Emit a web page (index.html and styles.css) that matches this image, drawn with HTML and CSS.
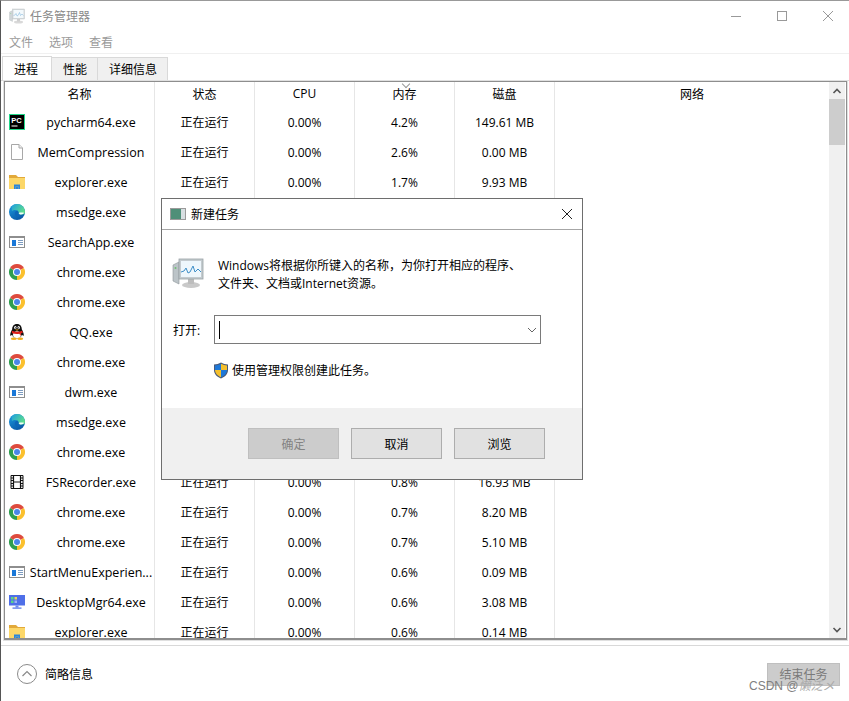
FILE: index.html
```html
<!DOCTYPE html>
<html lang="zh-CN">
<head>
    <meta charset="UTF-8">
    <title>任务管理器</title>
    <link rel="stylesheet" href="styles.css">
</head>
<body>
    <svg class="sprite" xmlns="http://www.w3.org/2000/svg">
        <defs>
            <linearGradient id="edgeBlue" x1="0" y1="0" x2="0.6" y2="1">
                <stop offset="0" stop-color="#1b9de2"/>
                <stop offset="1" stop-color="#0a5aa8"/>
            </linearGradient>
            <linearGradient id="edgeGreen" x1="0" y1="0" x2="1" y2="0.6">
                <stop offset="0" stop-color="#1e9ee0"/>
                <stop offset="1" stop-color="#5fe08a"/>
            </linearGradient>
        </defs>
        <symbol id="ic-pycharm" viewBox="0 0 16 16">
            <rect x="0.5" y="0.5" width="15" height="15" fill="#000" stroke="#21d789"/>
            <text x="2.2" y="8.6" class="pc-text">PC</text>
            <rect x="2.5" y="11.5" width="6" height="1" fill="#fff"/>
        </symbol>
        <symbol id="ic-doc" viewBox="0 0 16 16">
            <path d="M2.5 0.5H10L13.5 4V15.5H2.5Z" fill="#fff" stroke="#a8a8a8"/>
            <path d="M10 0.5V4H13.5" fill="#eee" stroke="#a8a8a8"/>
        </symbol>
        <symbol id="ic-folder" viewBox="0 0 16 16">
            <path d="M0 1H7L9 3H16V15H0Z" fill="#e2a93a"/>
            <rect x="0" y="4" width="16" height="11" fill="#fcd768"/>
            <path d="M5 15V10.5H11V15H9.5V12.5H6.5V15Z" fill="#2a86dc"/>
            <rect x="6.5" y="12.5" width="3" height="2.5" fill="#2a86dc"/>
        </symbol>
        <symbol id="ic-edge" viewBox="0 0 16 16">
            <circle cx="8" cy="8" r="8" fill="url(#edgeBlue)"/>
            <path d="M3 2C4.500 0.700 6.200 0 8 0C12.500 0 16 3.500 16 8.200C16 9.600 14.500 10.600 12 10.600C10 10.600 9 9.800 9.600 8.600C8.800 6.200 5.500 5.200 3 7C2.500 5.500 2.500 3.500 3 2Z" fill="url(#edgeGreen)"/>
            <path d="M9.600 8.600C8.800 9.800 9.600 11 11.500 11.400C10 13.200 7 13 6 10.800C5.400 9.200 6.400 7 8.200 6.600C9 7 9.600 7.800 9.600 8.600Z" fill="#0d66b8"/>
            <path d="M10 8.800C11 8.400 13 8.200 15 8.800C14.600 10 12.800 10.600 11.400 10.400C10.200 10.200 9.600 9.600 10 8.800Z" fill="#f2fbf8"/>
        </symbol>
        <symbol id="ic-app" viewBox="0 0 16 16">
            <rect x="0.5" y="2.5" width="15" height="11" fill="#fff" stroke="#8e8e8e"/>
            <rect x="0" y="2" width="16" height="2" fill="#8e8e8e"/>
            <rect x="3" y="6" width="4" height="6" fill="#1a78d8"/>
            <path d="M9 6.500H14M9 8.500H14M9 10.500H14" stroke="#7d9cc0"/>
        </symbol>
        <symbol id="ic-chrome" viewBox="0 0 16 16">
            <path d="M8 8L1.070 4A8 8 0 0 1 14.930 4Z" fill="#dd4b3e"/>
            <path d="M8 8L14.930 4A8 8 0 0 1 8 16Z" fill="#fbc02d"/>
            <path d="M8 8L8 16A8 8 0 0 1 1.070 4Z" fill="#2f9e4f"/>
            <circle cx="8" cy="8" r="4" fill="#fff"/>
            <circle cx="8" cy="8" r="3" fill="#4a86e8"/>
        </symbol>
        <symbol id="ic-qq" viewBox="0 0 16 16">
            <path d="M8 0C4.600 0 3.200 2.600 3.200 5.200C2 7.400 0.800 9.800 1.400 12L3.200 10.800C3.800 13.400 5.600 14.400 8 14.400C10.400 14.400 12.200 13.400 12.800 10.800L14.600 12C15.200 9.800 14 7.400 12.800 5.200C12.800 2.600 11.400 0 8 0Z" fill="#111"/>
            <ellipse cx="8" cy="10.800" rx="4" ry="3.600" fill="#fff"/>
            <ellipse cx="6.300" cy="3.600" rx="1.200" ry="1.500" fill="#fff"/>
            <ellipse cx="9.700" cy="3.600" rx="1.200" ry="1.500" fill="#fff"/>
            <circle cx="6.600" cy="3.800" r="0.600" fill="#111"/>
            <circle cx="9.400" cy="3.800" r="0.600" fill="#111"/>
            <path d="M6 5.400H10L8 6.800Z" fill="#f0b020"/>
            <path d="M2.800 6.800C6 8.200 10 8.200 13.200 6.800L13.800 8.800L11.800 9.400L12 12L10.200 9.800C8 10.200 5.600 10 3 9.200Z" fill="#e0201a"/>
            <ellipse cx="4.800" cy="14.800" rx="3" ry="1.200" fill="#f0b020"/>
            <ellipse cx="11.200" cy="14.800" rx="3" ry="1.200" fill="#f0b020"/>
        </symbol>
        <symbol id="ic-film" viewBox="0 0 16 16">
            <path d="M2 1.500H14V14.500H2Z" fill="#fff" stroke="#111" stroke-width="1"/>
            <path d="M4.500 1.500V14.500M11.500 1.500V14.500M4.500 8H11.500" stroke="#111" stroke-width="1.200"/>
            <path d="M2 4H4.500M2 6.500H4.500M2 9.500H4.500M2 12H4.500M11.500 4H14M11.500 6.500H14M11.500 9.500H14M11.500 12H14" stroke="#111"/>
        </symbol>
        <symbol id="ic-desktop" viewBox="0 0 16 16">
            <rect x="0" y="1" width="16" height="10.500" fill="#4f6fe8"/>
            <rect x="2" y="3" width="2.500" height="2.500" fill="#58d48a"/>
            <rect x="5.500" y="3" width="2.500" height="2.500" fill="#e6d85a"/>
            <rect x="2" y="6.500" width="2.500" height="2.500" fill="#58d48a"/>
            <rect x="5.500" y="6.500" width="2.500" height="2.500" fill="#9fb4f4"/>
            <rect x="6.500" y="11.500" width="3" height="2" fill="#6f8af0"/>
            <rect x="3.500" y="13.500" width="9" height="1.200" fill="#4f6fe8"/>
        </symbol>
        <symbol id="ic-monitor" viewBox="0 0 32 32">
            <ellipse cx="19" cy="28" rx="9" ry="3" fill="#c9c9c9"/>
            <rect x="16" y="22" width="6" height="5" fill="#bdbdbd"/>
            <path d="M1 8L7 5V27L1 24Z" fill="#bcc4c8" stroke="#8d9599" stroke-width="0.600"/>
            <circle cx="3.500" cy="11" r="1" fill="#6fbf73"/>
            <rect x="7" y="2" width="24" height="20" fill="#c4cbcf" stroke="#9aa2a6" stroke-width="0.800"/>
            <rect x="9" y="4" width="20" height="16" fill="#eef7fc"/>
            <path d="M9 15L12 14L14 11L16 16L18 15L21 9L23 15L26 12L29 15" fill="none" stroke="#3f8fc8" stroke-width="1"/>
        </symbol>
    </svg>

    <div class="window">
        <div class="titlebar">
            <svg class="title-icon"><use href="#ic-monitor"/></svg>
            <span class="title-text">任务管理器</span>
            <div class="win-controls">
                <span class="ctl"><svg width="12" height="12" viewBox="0 0 12 12"><path d="M1 6.500H11" stroke="#999"/></svg></span>
                <span class="ctl"><svg width="12" height="12" viewBox="0 0 12 12"><rect x="1.500" y="1.500" width="9" height="9" fill="none" stroke="#999"/></svg></span>
                <span class="ctl"><svg width="12" height="12" viewBox="0 0 12 12"><path d="M1 1L11 11M11 1L1 11" stroke="#999"/></svg></span>
            </div>
        </div>
        <div class="menubar">
            <span>文件</span>
            <span>选项</span>
            <span>查看</span>
        </div>
        <div class="tabs">
            <span class="tab active">进程</span>
            <span class="tab">性能</span>
            <span class="tab">详细信息</span>
        </div>
        <div class="frame">
            <div class="table">
                <div class="row head">
                    <div>名称</div>
                    <div>状态</div>
                    <div>CPU</div>
                    <div class="sorted">内存</div>
                    <div>磁盘</div>
                    <div>网络</div>
                </div>
                <div class="row"><div class="name"><svg class="ico"><use href="#ic-pycharm"/></svg><span>pycharm64.exe</span></div><div>正在运行</div><div>0.00%</div><div>4.2%</div><div>149.61 MB</div><div></div></div>
                <div class="row"><div class="name"><svg class="ico"><use href="#ic-doc"/></svg><span>MemCompression</span></div><div>正在运行</div><div>0.00%</div><div>2.6%</div><div>0.00 MB</div><div></div></div>
                <div class="row"><div class="name"><svg class="ico"><use href="#ic-folder"/></svg><span>explorer.exe</span></div><div>正在运行</div><div>0.00%</div><div>1.7%</div><div>9.93 MB</div><div></div></div>
                <!-- the next nine rows sit behind the dialog, their values don't show -->
                <div class="row"><div class="name"><svg class="ico"><use href="#ic-edge"/></svg><span>msedge.exe</span></div><div></div><div></div><div></div><div></div><div></div></div>
                <div class="row"><div class="name"><svg class="ico"><use href="#ic-app"/></svg><span>SearchApp.exe</span></div><div></div><div></div><div></div><div></div><div></div></div>
                <div class="row"><div class="name"><svg class="ico"><use href="#ic-chrome"/></svg><span>chrome.exe</span></div><div></div><div></div><div></div><div></div><div></div></div>
                <div class="row"><div class="name"><svg class="ico"><use href="#ic-chrome"/></svg><span>chrome.exe</span></div><div></div><div></div><div></div><div></div><div></div></div>
                <div class="row"><div class="name"><svg class="ico"><use href="#ic-qq"/></svg><span>QQ.exe</span></div><div></div><div></div><div></div><div></div><div></div></div>
                <div class="row"><div class="name"><svg class="ico"><use href="#ic-chrome"/></svg><span>chrome.exe</span></div><div></div><div></div><div></div><div></div><div></div></div>
                <div class="row"><div class="name"><svg class="ico"><use href="#ic-app"/></svg><span>dwm.exe</span></div><div></div><div></div><div></div><div></div><div></div></div>
                <div class="row"><div class="name"><svg class="ico"><use href="#ic-edge"/></svg><span>msedge.exe</span></div><div></div><div></div><div></div><div></div><div></div></div>
                <div class="row"><div class="name"><svg class="ico"><use href="#ic-chrome"/></svg><span>chrome.exe</span></div><div></div><div></div><div></div><div></div><div></div></div>
                <div class="row"><div class="name"><svg class="ico"><use href="#ic-film"/></svg><span>FSRecorder.exe</span></div><div>正在运行</div><div>0.00%</div><div>0.8%</div><div>16.93 MB</div><div></div></div>
                <div class="row"><div class="name"><svg class="ico"><use href="#ic-chrome"/></svg><span>chrome.exe</span></div><div>正在运行</div><div>0.00%</div><div>0.7%</div><div>8.20 MB</div><div></div></div>
                <div class="row"><div class="name"><svg class="ico"><use href="#ic-chrome"/></svg><span>chrome.exe</span></div><div>正在运行</div><div>0.00%</div><div>0.7%</div><div>5.10 MB</div><div></div></div>
                <div class="row"><div class="name"><svg class="ico"><use href="#ic-app"/></svg><span>StartMenuExperien...</span></div><div>正在运行</div><div>0.00%</div><div>0.6%</div><div>0.09 MB</div><div></div></div>
                <div class="row"><div class="name"><svg class="ico"><use href="#ic-desktop"/></svg><span>DesktopMgr64.exe</span></div><div>正在运行</div><div>0.00%</div><div>0.6%</div><div>3.08 MB</div><div></div></div>
                <div class="row"><div class="name"><svg class="ico"><use href="#ic-folder"/></svg><span>explorer.exe</span></div><div>正在运行</div><div>0.00%</div><div>0.6%</div><div>0.14 MB</div><div></div></div>
            </div>
            <div class="scrollbar">
                <span class="arrow"><svg width="10" height="6" viewBox="0 0 10 6"><path d="M1.500 5L5 1.500L8.500 5" fill="none" stroke="#555" stroke-width="1.600"/></svg></span>
                <div class="track"><div class="thumb"></div></div>
                <span class="arrow"><svg width="10" height="6" viewBox="0 0 10 6"><path d="M1.500 1L5 4.500L8.500 1" fill="none" stroke="#555" stroke-width="1.600"/></svg></span>
            </div>
        </div>
        <div class="footer">
            <div class="less">
                <svg width="20" height="20" viewBox="0 0 20 20"><circle cx="10" cy="10" r="9.500" fill="none" stroke="#8a8a8a"/><path d="M5.500 12L10 7.500L14.500 12" fill="none" stroke="#8a8a8a" stroke-width="1.200"/></svg>
                <span>简略信息</span>
            </div>
            <span class="end-task">结束任务</span>
        </div>
    </div>

    <div class="dialog">
        <div class="dlg-title">
            <svg class="dlg-title-icon" viewBox="0 0 16 16">
                <rect x="0.500" y="2.500" width="15" height="11" fill="#fff" stroke="#9a9a9a"/>
                <rect x="1" y="3" width="10" height="10" fill="#4f8f78"/>
                <rect x="11" y="3" width="4" height="10" fill="#d8dfe2"/>
            </svg>
            <span>新建任务</span>
            <svg class="dlg-close" width="12" height="12" viewBox="0 0 12 12"><path d="M1 1L11 11M11 1L1 11" stroke="#222"/></svg>
        </div>
        <div class="dlg-body">
            <div class="dlg-intro">
                <svg class="dlg-monitor"><use href="#ic-monitor"/></svg>
                <p>Windows将根据你所键入的名称，为你打开相应的程序、<br>文件夹、文档或Internet资源。</p>
            </div>
            <div class="dlg-open">
                <label>打开:</label>
                <div class="combo">
                    <span class="caret"></span>
                    <svg width="10" height="6" viewBox="0 0 10 6"><path d="M1 1L5 5L9 1" fill="none" stroke="#666"/></svg>
                </div>
            </div>
            <div class="dlg-admin">
                <svg width="16" height="17" viewBox="0 0 16 17">
                    <path d="M8 0.500C10 1.800 12.500 2.500 15 2.500V8C15 12 12 15 8 16.500C4 15 1 12 1 8V2.500C3.500 2.500 6 1.800 8 0.500Z" fill="#4a5a78"/>
                    <path d="M8 1.700V8H2V3.500C4 3.400 6 2.800 8 1.700Z" fill="#1e78d8"/>
                    <path d="M8 1.700C10 2.800 12 3.400 14 3.500V8H8Z" fill="#f5c02c"/>
                    <path d="M2 8H8V15.200C4.800 14 2.200 11.500 2 8Z" fill="#f5c02c"/>
                    <path d="M8 8H14C13.800 11.500 11.200 14 8 15.200Z" fill="#1e78d8"/>
                </svg>
                <span>使用管理权限创建此任务。</span>
            </div>
        </div>
        <div class="dlg-foot">
            <span class="btn disabled">确定</span>
            <span class="btn">取消</span>
            <span class="btn">浏览</span>
        </div>
    </div>

    <span class="watermark">CSDN @<i>懒泛メ</i></span>
</body>
</html>
```

FILE: styles.css
```css
* {
    box-sizing: border-box;
}
html, body {
    margin: 0;
    padding: 0;
}
body {
    width: 849px;
    height: 701px;
    overflow: hidden;
    background-color: #fff;
    color: #000;
    font-family: "Open Sans", "Noto Sans CJK SC", sans-serif;
    font-size: 12px;
}
.sprite {
    position: absolute;
    width: 0;
    height: 0;
}
.window {
    width: 849px;
    height: 701px;
    display: flex;
    flex-direction: column;
    border-top: 1px solid #999;
    border-left: 1px solid #555;
}

/* title bar and menu */
.titlebar {
    height: 29px;
    display: flex;
    align-items: center;
    padding-left: 8px;
    color: #8a8a8a;
}
.title-icon {
    width: 16px;
    height: 16px;
    margin-right: 5px;
    opacity: 0.7;
}
.win-controls {
    margin-left: auto;
    margin-right: -2px;
    display: flex;
}
.ctl {
    width: 46px;
    height: 29px;
    display: flex;
    align-items: center;
    justify-content: center;
}
.menubar {
    height: 24px;
    display: flex;
    align-items: center;
    gap: 16px;
    padding-left: 8px;
    color: #9a9a9a;
    border-bottom: 1px solid #f0f0f0;
}

/* tabs */
.tabs {
    height: 27px;
    display: flex;
    align-items: flex-end;
    padding-left: 1px;
    border-bottom: 1px solid #d9d9d9;
}
.tab {
    height: 23px;
    padding: 0 10px 0 11px;
    display: flex;
    align-items: center;
    background-color: #f0f0f0;
    border-top: 1px solid #d9d9d9;
    border-right: 1px solid #d9d9d9;
}
.tab.active {
    height: 25px;
    width: 50px;
    background-color: #fff;
    padding: 0 0 0 11px;
    border-left: 1px solid #d9d9d9;
    margin-bottom: -1px;
}

/* process table */
.frame {
    height: 559px;
    margin: 0 2px 0 3px;
    display: flex;
    border: 1px solid #8e8e8e;
    border-bottom: 2px solid #8e8e8e;
    overflow: hidden;
    box-shadow: 0 0 0 1px #e0e0e0;
}
.table {
    flex: 1;
    overflow: hidden;
}
.row {
    height: 30px;
    display: grid;
    grid-template-columns: 150px repeat(4, 100px) 1fr;
}
.row > div {
    display: flex;
    align-items: center;
    justify-content: center;
    border-right: 1px solid #e6e6e6;
    white-space: nowrap;
}
.row > div:last-child {
    border-right: none;
}
.row.head {
    height: 25px;
}
.row.head > div {
    padding-bottom: 2px;
}
.sorted {
    position: relative;
}
.sorted::before {
    content: "";
    position: absolute;
    top: -1px;
    left: 48px;
    width: 5px;
    height: 5px;
    border-right: 1px solid #999;
    border-bottom: 1px solid #999;
    transform: rotate(45deg);
}
.row > .name {
    justify-content: flex-start;
    padding-left: 4px;
}
.ico {
    width: 16px;
    height: 16px;
    flex: none;
}
.name span {
    flex: 1;
    padding-left: 3px;
    text-align: center;
    font-size: 12.5px;
}
.pc-text {
    font-family: "Liberation Sans", sans-serif;
    font-size: 7.500px;
    font-weight: bold;
    fill: #fff;
}

/* scrollbar */
.scrollbar {
    width: 16px;
    margin-right: 1px;
    display: flex;
    flex-direction: column;
    background-color: #f0f0f0;
}
.arrow {
    height: 17px;
    flex: none;
    display: flex;
    align-items: center;
    justify-content: center;
}
.track {
    flex: 1;
}
.thumb {
    height: 46px;
    background-color: #cdcdcd;
}

/* bottom bar */
.footer {
    flex: 1;
    margin-top: 5px;
    border-top: 1px solid #d9d9d9;
    display: flex;
    align-items: center;
    justify-content: space-between;
    padding: 1px 9px 0 16px;
}
.less {
    display: flex;
    align-items: center;
    gap: 8px;
}
.end-task {
    width: 73px;
    height: 23px;
    display: flex;
    align-items: center;
    justify-content: center;
    background-color: #ccc;
    border: 1px solid #bfbfbf;
    color: #7a7a7a;
}
.watermark {
    position: absolute;
    left: 749px;
    top: 676px;
    font-family: "Liberation Sans", sans-serif;
    font-size: 12px;
    color: #7f7f7f;
}
.watermark i {
    font-family: "Noto Sans CJK SC", sans-serif;
    color: #aaa;
}

/* run dialog */
.dialog {
    position: absolute;
    left: 161px;
    top: 198px;
    width: 422px;
    height: 282px;
    display: flex;
    flex-direction: column;
    background-color: #fff;
    border: 1px solid #6e6e6e;
}
.dlg-title {
    height: 31px;
    flex: none;
    display: flex;
    align-items: center;
    padding: 0 9px 0 8px;
    border-bottom: 1px solid #a6a6a6;
}
.dlg-title-icon {
    width: 16px;
    height: 16px;
    margin-right: 5px;
}
.dlg-close {
    margin-left: auto;
}
.dlg-body {
    flex: 1;
    padding: 27px 41px 0 10px;
}
.dlg-intro {
    display: flex;
    align-items: flex-start;
    gap: 14px;
}
.dlg-monitor {
    width: 32px;
    height: 32px;
    flex: none;
}
.dlg-intro p {
    margin: 0;
    line-height: 18px;
}
.dlg-open {
    display: flex;
    align-items: center;
    margin-top: 22px;
}
.dlg-open label {
    width: 42px;
    flex: none;
    padding-left: 1px;
}
.combo {
    flex: 1;
    height: 29px;
    border: 1px solid #7a7a7a;
    display: flex;
    align-items: center;
    justify-content: space-between;
    padding: 0 3px 0 4px;
}
.caret {
    width: 1px;
    height: 18px;
    background-color: #000;
}
.dlg-admin {
    display: flex;
    align-items: center;
    gap: 3px;
    margin: 17px 0 0 41px;
}
.dlg-foot {
    height: 71px;
    flex: none;
    display: flex;
    gap: 12px;
    justify-content: flex-end;
    padding: 20px 37px 0 0;
    background-color: #f0f0f0;
}
.btn {
    width: 91px;
    height: 31px;
    display: flex;
    align-items: center;
    justify-content: center;
    background-color: #e1e1e1;
    border: 1px solid #adadad;
}
.btn.disabled {
    background-color: #ccc;
    border-color: #bfbfbf;
    color: #838383;
}
```
